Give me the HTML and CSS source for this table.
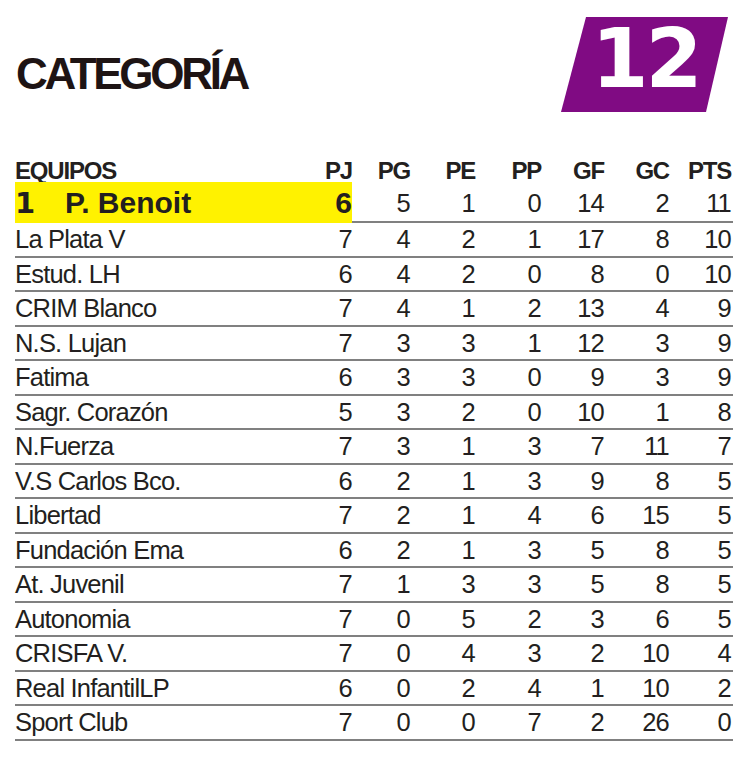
FILE: index.html
```html
<!DOCTYPE html>
<html lang="es">
<head>
<meta charset="utf-8">
<title>Categoría 12</title>
<link rel="stylesheet" href="styles.css">
</head>
<body>
<div class="page">
  <header class="top">
    <h1 class="title">CATEGORÍA</h1>
    <div class="badge"><span class="badge-num">12</span></div>
  </header>
  <div class="table">
    <div class="row head">
      <div class="c name">EQUIPOS</div>
      <div class="c">PJ</div><div class="c">PG</div><div class="c">PE</div><div class="c">PP</div><div class="c">GF</div><div class="c">GC</div><div class="c">PTS</div>
    </div>
    <div class="row lead">
      <div class="c name hl"><span class="rank">1</span>P. Benoit</div>
      <div class="c hl">6</div>
      <div class="c">5</div><div class="c">1</div><div class="c">0</div><div class="c">14</div><div class="c">2</div><div class="c">11</div>
    </div>
    <div class="row"><div class="c name">La Plata V</div><div class="c">7</div><div class="c">4</div><div class="c">2</div><div class="c">1</div><div class="c">17</div><div class="c">8</div><div class="c">10</div></div>
    <div class="row"><div class="c name">Estud. LH</div><div class="c">6</div><div class="c">4</div><div class="c">2</div><div class="c">0</div><div class="c">8</div><div class="c">0</div><div class="c">10</div></div>
    <div class="row"><div class="c name">CRIM Blanco</div><div class="c">7</div><div class="c">4</div><div class="c">1</div><div class="c">2</div><div class="c">13</div><div class="c">4</div><div class="c">9</div></div>
    <div class="row"><div class="c name">N.S. Lujan</div><div class="c">7</div><div class="c">3</div><div class="c">3</div><div class="c">1</div><div class="c">12</div><div class="c">3</div><div class="c">9</div></div>
    <div class="row"><div class="c name">Fatima</div><div class="c">6</div><div class="c">3</div><div class="c">3</div><div class="c">0</div><div class="c">9</div><div class="c">3</div><div class="c">9</div></div>
    <div class="row"><div class="c name">Sagr. Corazón</div><div class="c">5</div><div class="c">3</div><div class="c">2</div><div class="c">0</div><div class="c">10</div><div class="c">1</div><div class="c">8</div></div>
    <div class="row"><div class="c name">N.Fuerza</div><div class="c">7</div><div class="c">3</div><div class="c">1</div><div class="c">3</div><div class="c">7</div><div class="c">11</div><div class="c">7</div></div>
    <div class="row"><div class="c name">V.S Carlos Bco.</div><div class="c">6</div><div class="c">2</div><div class="c">1</div><div class="c">3</div><div class="c">9</div><div class="c">8</div><div class="c">5</div></div>
    <div class="row"><div class="c name">Libertad</div><div class="c">7</div><div class="c">2</div><div class="c">1</div><div class="c">4</div><div class="c">6</div><div class="c">15</div><div class="c">5</div></div>
    <div class="row"><div class="c name">Fundación Ema</div><div class="c">6</div><div class="c">2</div><div class="c">1</div><div class="c">3</div><div class="c">5</div><div class="c">8</div><div class="c">5</div></div>
    <div class="row"><div class="c name">At. Juvenil</div><div class="c">7</div><div class="c">1</div><div class="c">3</div><div class="c">3</div><div class="c">5</div><div class="c">8</div><div class="c">5</div></div>
    <div class="row"><div class="c name">Autonomia</div><div class="c">7</div><div class="c">0</div><div class="c">5</div><div class="c">2</div><div class="c">3</div><div class="c">6</div><div class="c">5</div></div>
    <div class="row"><div class="c name">CRISFA V.</div><div class="c">7</div><div class="c">0</div><div class="c">4</div><div class="c">3</div><div class="c">2</div><div class="c">10</div><div class="c">4</div></div>
    <div class="row"><div class="c name">Real InfantilLP</div><div class="c">6</div><div class="c">0</div><div class="c">2</div><div class="c">4</div><div class="c">1</div><div class="c">10</div><div class="c">2</div></div>
    <div class="row"><div class="c name">Sport Club</div><div class="c">7</div><div class="c">0</div><div class="c">0</div><div class="c">7</div><div class="c">2</div><div class="c">26</div><div class="c">0</div></div>
  </div>
</div>
</body>
</html>
```
FILE: styles.css
```css
* { box-sizing: border-box; }
html, body { margin: 0; padding: 0; background: #fff; }
body {
  font-family: "Liberation Sans", Arial, sans-serif;
  color: #231f20;
  width: 750px;
}
.page { padding: 0 17px 0 15px; }

.top {
  height: 161px;
  display: flex;
  justify-content: space-between;
  align-items: flex-start;
  padding-right: 5px;
}
.title {
  margin: 52px 0 0 1px;
  font-size: 44px;
  line-height: 44px;
  font-weight: 700;
  letter-spacing: -3.3px;
  color: #1e1414;
}
.badge {
  margin-top: 17px;
  width: 167px;
  height: 95px;
  background: #800b83;
  clip-path: polygon(25px 0, 167px 0, 145px 95px, 0 95px);
  display: flex;
  justify-content: center;
}
.badge-num {
  font-family: "DejaVu Sans", sans-serif;
  font-weight: 700;
  font-size: 82px;
  line-height: 83px;
  color: #fff;
  letter-spacing: -3px;
  padding-left: 2px;
}

.row {
  display: grid;
  grid-template-columns: 277px 60px 58px 65px 66px 63px 65px 64px;
  height: 34.5px;
  border-bottom: 2px solid #808080;
  font-size: 25.5px;
  letter-spacing: -0.8px;
  line-height: 32.5px;
}
.c { text-align: right; white-space: nowrap; }
.c:last-child { padding-right: 2px; }
.c.name { text-align: left; }

.row.head {
  height: 21px;
  border-bottom: 0;
  font-size: 24px;
  font-weight: 700;
  letter-spacing: -1.2px;
  line-height: 20px;
}

.row.lead {
  height: 41px;
  border-bottom: 0;
}
.row.lead .c {
  height: 41px;
  padding-top: 4px;
  line-height: 35px;
  border-bottom: 2px solid #808080;
}
.row.lead .c.hl {
  background: #fff200;
  border-bottom: 0;
  padding-top: 0;
  line-height: 41px;
  font-size: 30px;
  font-weight: 700;
  letter-spacing: 0;
}
.rank {
  display: inline-block;
  width: 50px;
  font-family: "DejaVu Sans", sans-serif;
  font-size: 29px;
}
```
